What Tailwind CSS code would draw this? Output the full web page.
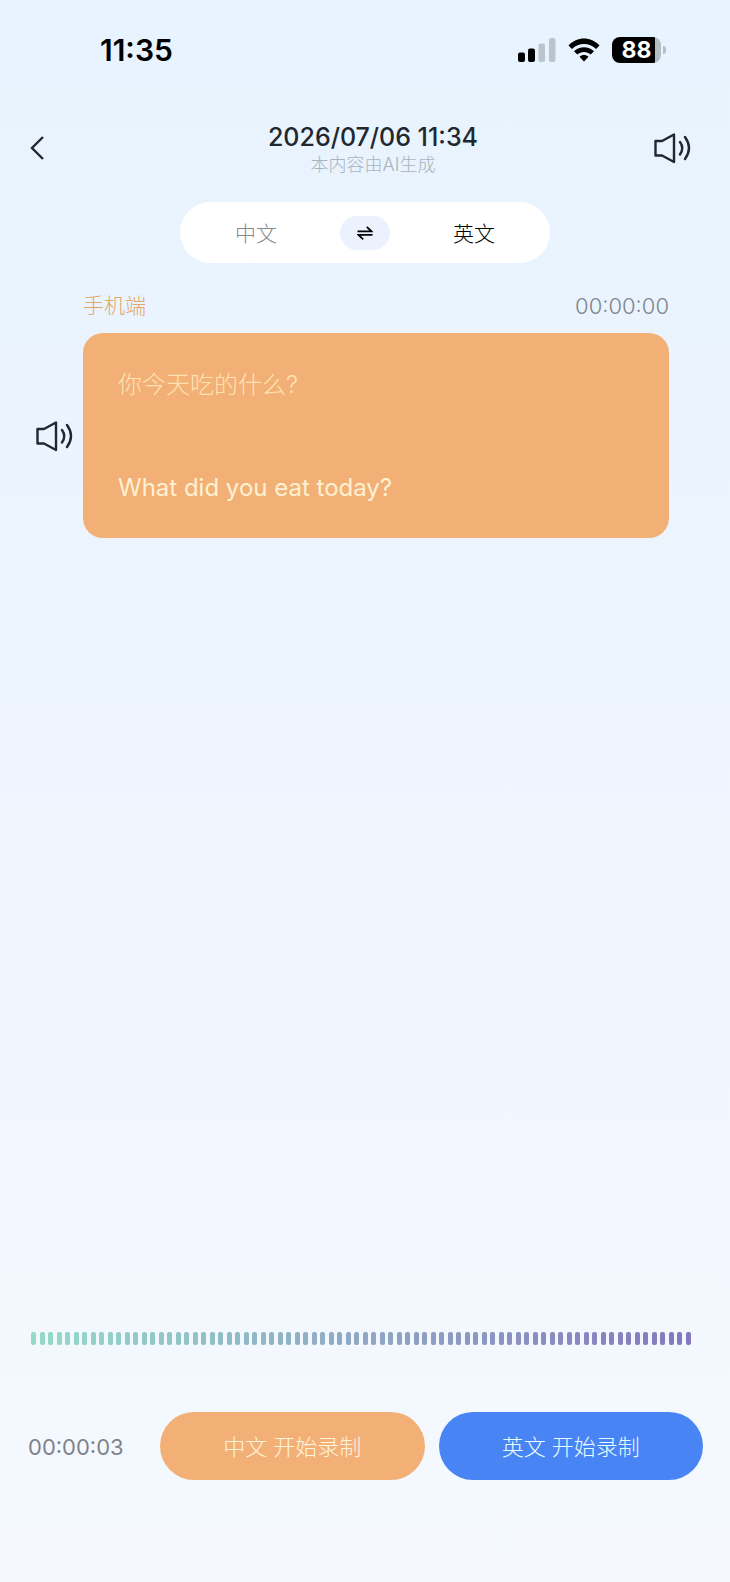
<!DOCTYPE html>
<html lang="zh-CN">
<head>
    <meta charset="UTF-8">
    <meta name="viewport" content="width=device-width, initial-scale=1.0">
    <title>同声翻译</title>
    <script src="https://cdn.jsdelivr.net/npm/@tailwindcss/browser@4"></script>
</head>
<body class="min-h-screen flex flex-col bg-linear-to-b from-[#e7f3fe] via-[#eef5fe] via-45% to-[#f5f9ff] font-['Inter','Noto_Sans_CJK_SC',sans-serif] text-[#22272e]">
    <!-- Status bar -->
    <div class="flex items-center justify-between h-[100px] pl-[100px] pr-16 text-black">
        <span class="text-[30px] leading-9 font-semibold">11:35</span>
        <div class="flex items-center gap-3">
            <svg class="w-[38px] h-6" viewBox="0 0 38 24">
                <rect x="0" y="14.500" width="7" height="9.500" rx="2" fill="#000"/>
                <rect x="10" y="10.500" width="7" height="13.500" rx="2" fill="#000"/>
                <rect x="20.500" y="5.500" width="6.500" height="18.500" rx="2" fill="#b9c4cd"/>
                <rect x="31" y="0" width="6.500" height="24" rx="2" fill="#b9c4cd"/>
            </svg>
            <svg class="w-8 h-6" viewBox="0 0 32 24">
                <path d="M0.500 7.500C9 -1.800 23 -1.800 31.500 7.500L28 11C21.500 4.200 10.500 4.200 4 11Z" fill="#000"/>
                <path d="M6 13.200C11.500 7.800 20.500 7.800 26 13.200L22.700 16.500C19 13 13 13 9.300 16.500Z" fill="#000"/>
                <path d="M11.500 18.700C14 16.500 18 16.500 20.500 18.700L16 23.500Z" fill="#000"/>
            </svg>
            <div class="flex items-center gap-[2px]">
                <div class="w-[49px] h-[26px] rounded-lg bg-linear-to-r from-black from-88% to-[#b4bdc4] to-88% flex items-center justify-center text-white text-[23px] leading-6 font-bold">88</div>
                <div class="w-[3px] h-2 rounded-r-full bg-[#b4bdc4]"></div>
            </div>
        </div>
    </div>

    <!-- Title bar -->
    <header class="grid grid-cols-[1fr_auto_1fr] items-center h-[96px] pl-7 pr-[38px]">
        <button class="justify-self-start" aria-label="返回">
            <svg class="w-5 h-7" viewBox="0 0 20 28" fill="none" stroke="#22272e" stroke-width="2.400">
                <path d="M15 3L4 14L15 25"/>
            </svg>
        </button>
        <div class="pl-[26px] pt-[2px] text-center">
            <h1 class="text-[25px] leading-8 font-medium">2026/07/06 11:34</h1>
            <p class="text-lg leading-6 font-light text-[#a9b3bc]">本内容由AI生成</p>
        </div>
        <button class="justify-self-end" aria-label="播放">
            <svg class="w-[38px] h-8" viewBox="0 0 38 32" fill="none" stroke="#22272e" stroke-width="2.400" stroke-linejoin="round" stroke-linecap="round">
                <path d="M1.500 9H8L20 2.500V30L8 23.500H1.500Z"/>
                <path d="M26 10Q30.500 16 26 22.500M31 5Q39 16 31 27"/>
            </svg>
        </button>
    </header>

    <main class="px-[61px] pt-[6px]">
        <!-- Language switch -->
        <div class="mx-auto w-[370px] h-[61px] rounded-full bg-white grid grid-cols-[1fr_50px_1fr] gap-2 items-center text-[21px] leading-6">
            <button class="pt-[2px] font-light text-[#85898e]">中文</button>
            <button class="h-[34px] rounded-full bg-[#ebf1fd] flex items-center justify-center" aria-label="切换语言">
                <!-- half-barb arrows, right over left -->
                <svg class="w-4 h-4" viewBox="0 0 16 16" fill="none" stroke="#000" stroke-width="1.800">
                    <path d="M0.500 6.300H14.500L9.800 1.800M15.500 9.900H1.500L6.200 14.400"/>
                </svg>
            </button>
            <button class="pt-[2px] font-light text-black">英文</button>
        </div>
    </main>

    <section class="grid grid-cols-[1fr_auto] pl-[83px] pr-[61px] pt-[27px]">
        <div class="text-[21px] leading-8 font-light text-[#e3a869]">手机端</div>
        <time class="text-[22px] leading-8 font-light text-[#7d858b]">00:00:00</time>
    </section>

    <!-- Message -->
    <article class="flex items-center gap-[9px] pl-9 pr-[61px] pt-[11px]">
        <button class="shrink-0" aria-label="播放译文">
            <svg class="w-[38px] h-8" viewBox="0 0 38 32" fill="none" stroke="#22272e" stroke-width="2.400" stroke-linejoin="round" stroke-linecap="round">
                <path d="M1.500 9H8L20 2.500V30L8 23.500H1.500Z"/>
                <path d="M26 10Q30.500 16 26 22.500M31 5Q39 16 31 27"/>
            </svg>
        </button>
        <div class="flex-1 flex flex-col justify-between h-[205px] rounded-[20px] bg-[#f2b076] px-[35px] pt-8 pb-[30px] text-2xl leading-10">
            <p class="font-light text-[#fde3b4]">你今天吃的什么?</p>
            <p class="text-[#fff0d2]">What did you eat today?</p>
        </div>
    </article>

    <footer class="mt-auto pb-[102px]">
        <div id="wave" class="flex justify-between h-[13px] pl-[31px] pr-[39px]"></div>
        <div class="flex items-center pt-[67px] pl-7 pr-[27px]">
            <time class="w-[132px] pt-[2px] text-[22px] leading-8 text-[#80848a]">00:00:03</time>
            <button class="flex-1 h-[68px] pt-[2px] rounded-full bg-[#f2b076] text-[22px] font-light text-[#fff4de]">中文 开始录制</button>
            <button class="flex-1 ml-[14px] h-[68px] pt-[2px] rounded-full bg-[#4984f5] text-[22px] font-light text-[#eaffff]">英文 开始录制</button>
        </div>
    </footer>

    <script>
        // level bars, fading from mint to violet
        const stops = [[148, 218, 200], [143, 168, 196], [134, 120, 190]];
        const wave = document.getElementById('wave');
        const count = 78;
        for (let i = 0; i < count; i++) {
            const t = (i / (count - 1)) * 2;
            const k = t < 1 ? 0 : 1;
            const rgb = stops[k].map((c, j) => Math.round(c + (stops[k + 1][j] - c) * (t - k)));
            const bar = document.createElement('span');
            bar.className = 'w-[5px] rounded-[2px]';
            bar.style.background = `rgb(${rgb})`;
            wave.appendChild(bar);
        }
    </script>
</body>
</html>
